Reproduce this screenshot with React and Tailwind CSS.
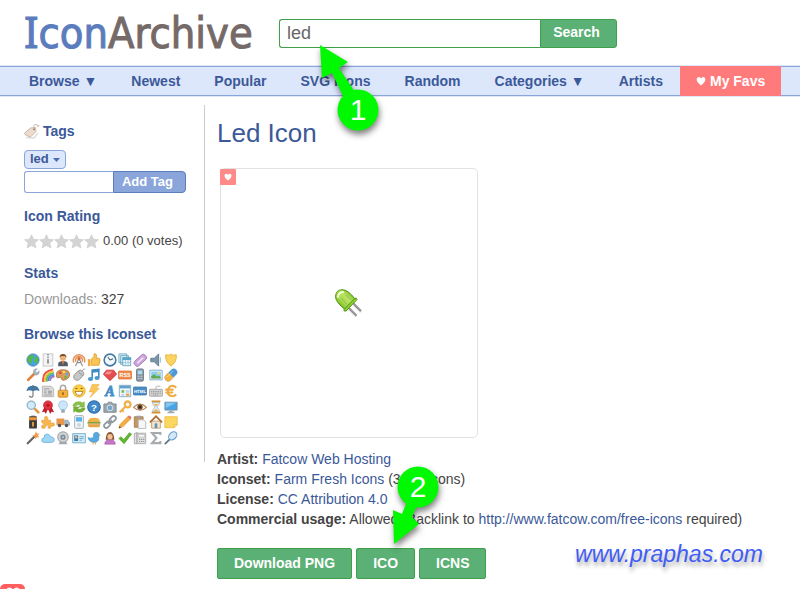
import React, { useState } from 'react';

const navItems = [
  { label: 'Browse ▼', href: '#browse' },
  { label: 'Newest', href: '#newest' },
  { label: 'Popular', href: '#popular' },
  { label: 'SVG Icons', href: '#svg' },
  { label: 'Random', href: '#random' },
  { label: 'Categories ▼', href: '#categories' },
  { label: 'Artists', href: '#artists' },
];

// 16x16 drawings, in the order of the iconset grid
const iconset = [
  {
    name: 'globe',
    art: (
      <>
        <circle cx="8" cy="8" r="7" fill="#4aa3e0" stroke="#3a86c4" />
        <path d="M3 4l4-2.500 2 2-1 3-2 1 1 3-2 2-3-3-.5-3z" fill="#54b948" />
        <path d="M10 6l3-2 1.500 4-2 4-2-.5-1.500-3z" fill="#54b948" />
      </>
    ),
  },
  {
    name: 'zip',
    art: (
      <>
        <path d="M2.500 1h11v14h-11z" fill="#f4f4f4" stroke="#c2c2c2" />
        <path d="M8 1v6" stroke="#777" strokeWidth="2" strokeDasharray="1 1" />
        <path d="M7 7h2v5H7z" fill="#888" />
      </>
    ),
  },
  {
    name: 'user',
    art: (
      <>
        <path d="M2.500 15V12Q3 9 8 9t5.500 3v3z" fill="#4f5c68" />
        <path d="M6.500 9L8 14l1.500-5z" fill="#e07b39" />
        <circle cx="8" cy="5.500" r="3.500" fill="#e8b27a" />
        <path d="M4 5Q4 1 8 1t4 4l-2-1.500H6z" fill="#7c4a22" />
      </>
    ),
  },
  {
    name: 'antenna',
    art: (
      <>
        <path d="M2 11A6.500 6.500 0 1 1 14 11M4.500 10A4 4 0 1 1 11.500 10" fill="none" stroke="#e8925a" strokeWidth="1.700" />
        <path d="M8 6L4 15M8 6l4 9M6 11h4" stroke="#8d8d8d" strokeWidth="1.300" />
        <circle cx="8" cy="6.500" r="1.900" fill="#d86a33" />
      </>
    ),
  },
  {
    name: 'thumb up',
    art: (
      <>
        <path d="M5 7l3-3V1h2l1 2-.5 3H14l1 2-1.500 6H5z" fill="#fbc556" stroke="#dfa030" />
        <path d="M1 7h3v8H1z" fill="#f0ad3c" />
      </>
    ),
  },
  {
    name: 'clock',
    art: (
      <>
        <circle cx="8" cy="8" r="6.700" fill="#f2f8fc" stroke="#427aa5" strokeWidth="1.800" />
        <path d="M8 8L5.500 4.500M8 8l3.500-1.500" stroke="#495b69" strokeWidth="1.200" />
      </>
    ),
  },
  {
    name: 'tables',
    art: (
      <>
        <path d="M1 1h9v10H1zM3 3h9v10H3z" fill="#d7edf5" stroke="#6caac4" />
        <path d="M5.500 5.500h9v9h-9z" fill="#eef8fc" stroke="#5f9fbd" />
        <path d="M5 5h10v3H5z" fill="#58a6c9" />
        <path d="M8.500 8v6M11.500 8v6M6 11h8" stroke="#9cc8da" />
      </>
    ),
  },
  {
    name: 'attachment',
    art: (
      <g transform="rotate(-42 8 8)">
        <rect x="0" y="5" width="16" height="7" rx="2.500" fill="#cda6dc" stroke="#a779bb" />
        <path d="M4 8.500h8" stroke="#f5eef8" strokeWidth="1.600" strokeLinecap="round" />
      </g>
    ),
  },
  {
    name: 'speaker',
    art: (
      <>
        <path d="M2 6h4l5-5v14l-5-5H2z" fill="#7c96aa" stroke="#61798b" />
        <path d="M13 5v6" stroke="#a4c3d9" strokeWidth="1.500" />
      </>
    ),
  },
  {
    name: 'shield',
    art: <path d="M8 1l2 1.500L14 2q1 8-6 13Q1 10 2 2l4 .5z" fill="#fbd35f" stroke="#e8af3b" />,
  },
  {
    name: 'wrench',
    art: (
      <>
        <path d="M2.500 13.500L10 6" stroke="#e0803a" strokeWidth="3" strokeLinecap="round" />
        <path d="M13 1L10.500 3.500l2 2L15 3q1 4-2.500 5T8.500 5.500 10 1.200 13 1z" fill="#a9b4bb" stroke="#8d979d" strokeWidth=".5" />
      </>
    ),
  },
  {
    name: 'rainbow',
    art: (
      <g fill="none" strokeWidth="2.200" transform="rotate(-12 8 8)">
        <path d="M1 15Q1.500 2.500 15 3" stroke="#ec5348" />
        <path d="M3 15Q3.500 4.500 15 5" stroke="#f8c33d" />
        <path d="M5 15Q5.500 6.500 15 7" stroke="#69bd52" />
        <path d="M7 15Q7.500 8.500 15 9" stroke="#4592db" />
        <path d="M9 15Q9.500 11 15 11" stroke="#a076c5" />
      </g>
    ),
  },
  {
    name: 'palette',
    art: (
      <>
        <path d="M8 2q7 0 7.500 5T9 14q-3 0-3-2t-3-1T.5 7Q1 2 8 2z" fill="#d99a5b" stroke="#b0733b" />
        <circle cx="5" cy="5.500" r="1.500" fill="#e9453a" />
        <circle cx="9" cy="4.500" r="1.500" fill="#f7e04b" />
        <circle cx="12.500" cy="7" r="1.500" fill="#56a8e6" />
        <circle cx="11" cy="10.500" r="1.500" fill="#62b84b" />
      </>
    ),
  },
  {
    name: 'mouse',
    art: (
      <>
        <path d="M11 4q1-3 4-3" fill="none" stroke="#999" />
        <rect x="4" y="2" width="8" height="13" rx="4" fill="#c6c6c6" stroke="#989898" transform="rotate(45 8 8)" />
        <path d="M7 4l5 5" stroke="#8b8b8b" />
      </>
    ),
  },
  {
    name: 'music',
    art: (
      <>
        <path d="M6 12V2.500l7.500-1V11" fill="none" stroke="#3e8ac0" strokeWidth="1.800" />
        <path d="M5.500 2l8.500-1v3.500l-8.500 1z" fill="#3e8ac0" />
        <ellipse cx="4" cy="12.500" rx="3" ry="2.300" fill="#4b98cf" />
        <ellipse cx="11.500" cy="11.500" rx="3" ry="2.300" fill="#4b98cf" />
      </>
    ),
  },
  {
    name: 'ruby',
    art: (
      <>
        <path d="M4 2.500h8L15.500 7 8 14.500.5 7z" fill="#e54e50" stroke="#ce383d" />
        <path d="M4.500 4h6L8 7H2z" fill="#f78f8d" />
      </>
    ),
  },
  {
    name: 'rss',
    art: (
      <>
        <rect x=".5" y="3.500" width="15" height="9" rx="1" fill="#ef8c4e" stroke="#e3763a" />
        <text x="8" y="10.500" fontSize="6" fontWeight="700" textAnchor="middle" fill="#fff">RSS</text>
      </>
    ),
  },
  {
    name: 'phone',
    art: (
      <>
        <rect x="4" y="1" width="8" height="14" rx="1.500" fill="#8b98a3" stroke="#6f7b85" />
        <path d="M5.500 3h5v4h-5z" fill="#a9dbf3" />
        <path d="M5.500 9.500h5M5.500 12h5" stroke="#dee3e7" strokeDasharray="1 1" />
      </>
    ),
  },
  {
    name: 'picture',
    art: (
      <>
        <path d="M1 2.500h14v11H1z" fill="#fff" stroke="#719fc0" />
        <path d="M2.500 4h11v8h-11z" fill="#88cdf0" />
        <path d="M2.500 12V9.500L6 7l3 3 2-1.500 2.500 2V12z" fill="#62a84b" />
        <circle cx="11" cy="6" r="1.300" fill="#ffe56b" />
      </>
    ),
  },
  {
    name: 'pill',
    art: (
      <g transform="rotate(-45 8 8)">
        <rect x="-.5" y="4" width="17" height="8" rx="4" fill="#4d98d8" />
        <path d="M8 4H3.500a4 4 0 0 0 0 8H8z" fill="#f5b33c" />
        <path d="M3 6.500h10" stroke="#fff" strokeOpacity=".5" />
      </g>
    ),
  },
  {
    name: 'umbrella',
    art: (
      <>
        <path d="M.5 8Q1.500 2 8 2t7.500 6L12 7 8 8 4 7z" fill="#3e79a8" />
        <path d="M8 1v12q0 2-2 2t-2-1.500" fill="none" stroke="#646f78" strokeWidth="1.200" />
      </>
    ),
  },
  {
    name: 'newspaper',
    art: (
      <>
        <path d="M1.500 2.500h10l3 3v9h-13z" fill="#dcdcdc" stroke="#b0b0b0" />
        <path d="M3.500 5.500h6M3.500 8h3M3.500 10h3M3.500 12.500h9" stroke="#999" />
        <path d="M8 7.500h4.500V11H8z" fill="#aaa" />
      </>
    ),
  },
  {
    name: 'lock',
    art: (
      <>
        <path d="M5 8V4.500a3 3 0 0 1 6 0V8" fill="none" stroke="#a9a9a9" strokeWidth="1.800" />
        <rect x="2.500" y="7" width="11" height="8" rx="1" fill="#f3b03f" stroke="#ce8c27" />
        <path d="M8 9.500v3" stroke="#8a5a14" strokeWidth="1.600" />
      </>
    ),
  },
  {
    name: 'smiley',
    art: (
      <>
        <circle cx="8" cy="8" r="7" fill="#fcd143" stroke="#e8a92c" />
        <path d="M4 5.500q1-1.500 2 0M10 5.500q1-1.500 2 0" fill="none" stroke="#7d5414" strokeWidth="1.200" />
        <path d="M3.500 8.500h9q-1 4.500-4.500 4.500T3.500 8.500z" fill="#fff" stroke="#94661a" strokeWidth=".8" />
      </>
    ),
  },
  {
    name: 'lightning',
    art: <path d="M6 .5h8L10.500 5H14L3.500 15.500 7 9H2.500z" fill="#fbc75a" stroke="#eeae3d" strokeWidth=".7" />,
  },
  {
    name: 'font',
    art: (
      <text x="8" y="13.500" fontFamily="Liberation Serif, serif" fontSize="16" fontStyle="italic" fontWeight="700" textAnchor="middle" fill="#4690c9" stroke="#4690c9">A</text>
    ),
  },
  {
    name: 'calendar',
    art: (
      <>
        <path d="M1.500 1.500h13v13h-13z" fill="#eef6fa" stroke="#7ba8c2" />
        <path d="M2 2h12v3H2z" fill="#5fa1cd" />
        <path d="M4 7h3v3H4z" fill="#79b85d" />
        <path d="M9 7h4v3H9zM4 11h3v2.500H4z" fill="#bcd6e3" />
        <path d="M9 11h4v2.500H9z" fill="#f2a14c" />
      </>
    ),
  },
  {
    name: 'html',
    art: (
      <>
        <rect x=".5" y="3.500" width="15" height="9" rx="1" fill="#4c8fc6" stroke="#3979b0" />
        <text x="8" y="10" fontSize="5" fontWeight="700" textAnchor="middle" fill="#fff">HTML</text>
      </>
    ),
  },
  {
    name: 'keyboard',
    art: (
      <>
        <path d="M8 6V3.500q0-1 1.500-1H13" fill="none" stroke="#aaa" />
        <rect x=".5" y="6" width="15" height="8" rx="1" fill="#d2d2d2" stroke="#a5a5a5" />
        <path d="M2.500 8.500h11M2.500 10.500h11M5 12.500h6" stroke="#8e8e8e" strokeDasharray="1.200 .8" />
      </>
    ),
  },
  {
    name: 'euro',
    art: (
      <path d="M14 4.200Q12 2 9.500 2 5 2.300 4.500 8T9.500 14q2.500 0 4.500-2M1.500 6.500H11M1.500 9.700h9" fill="none" stroke="#f0ac44" strokeWidth="2.500" />
    ),
  },
  {
    name: 'magnifier',
    art: (
      <>
        <path d="M9.500 9.500L14 14" stroke="#e49a42" strokeWidth="3" strokeLinecap="round" />
        <circle cx="6" cy="6" r="4.700" fill="#cdebfa" stroke="#94aebd" strokeWidth="1.400" />
      </>
    ),
  },
  {
    name: 'ribbon',
    art: (
      <>
        <path d="M4 8l-3 6 3-.5L5.500 16 8 10l2.500 6 1.500-2.500 3 .5-3-6z" fill="#c31f2b" />
        <circle cx="8" cy="6" r="5" fill="#e23440" stroke="#c31f2b" />
        <circle cx="8" cy="6" r="2" fill="#b81825" />
      </>
    ),
  },
  {
    name: 'bulb',
    art: (
      <>
        <path d="M8 1q5 0 5 5 0 2-2.500 5h-5Q3 8 3 6q0-5 5-5z" fill="#cde6fa" stroke="#9dc4e3" />
        <path d="M6 11h4v3.500H6z" fill="#9aa5ad" />
      </>
    ),
  },
  {
    name: 'refresh',
    art: (
      <>
        <path d="M1 7q1-5 7-5 2.500 0 4 1.500L14 2v6H8l2-2Q6 4.500 4.500 7z" fill="#8bc34a" stroke="#6da52f" strokeWidth=".6" />
        <path d="M15 9q-1 5-7 5-2.500 0-4-1.500L2 14V8h6l-2 2q4 1.500 5.500-1z" fill="#76b337" stroke="#5f9629" strokeWidth=".6" />
      </>
    ),
  },
  {
    name: 'help',
    art: (
      <>
        <circle cx="8" cy="8" r="7.200" fill="#4089cb" stroke="#2e6ca8" strokeWidth="1.200" />
        <text x="8" y="12" fontSize="11" fontWeight="700" textAnchor="middle" fill="#fff">?</text>
      </>
    ),
  },
  {
    name: 'camera',
    art: (
      <>
        <path d="M1 4.500h4l1-2h4l1 2h4v9.500H1z" fill="#9ba5ad" stroke="#7e8890" />
        <circle cx="8" cy="9" r="3.300" fill="#74a5cc" stroke="#e5e9ec" />
      </>
    ),
  },
  {
    name: 'key',
    art: (
      <>
        <path d="M9 7l-7 7M4.500 11.500l2 2" stroke="#efae45" strokeWidth="2.400" />
        <circle cx="11" cy="5" r="3.300" fill="#fff" stroke="#f2b04a" strokeWidth="2.600" />
      </>
    ),
  },
  {
    name: 'eye',
    art: (
      <>
        <path d="M.5 8.500Q8 1 15.500 8.500 8 15 .5 8.500z" fill="#f8efe4" stroke="#b3875b" strokeWidth="1.200" />
        <circle cx="8" cy="8" r="3" fill="#69472c" />
        <circle cx="8" cy="8" r="1.200" fill="#241509" />
      </>
    ),
  },
  {
    name: 'hourglass',
    art: (
      <>
        <path d="M4 2.500h8q0 3-3 5.500 3 2.500 3 5.500H4q0-3 3-5.500-3-2.500-3-5.500z" fill="#e5f1f7" stroke="#a6bbc6" />
        <path d="M5.500 4.500h5L8 7.500zM5 13l3-3 3 3z" fill="#efb14c" />
        <path d="M3 1.500h10M3 14.500h10" stroke="#d79236" strokeWidth="2" />
      </>
    ),
  },
  {
    name: 'monitor',
    art: (
      <>
        <path d="M1 2.500h14v9H1z" fill="#4aa3e6" stroke="#78909f" />
        <path d="M2 3h12L2 9z" fill="#83c6f3" />
        <path d="M6 12h4v1.500h2V15H4v-1.500h2z" fill="#9dabb4" />
      </>
    ),
  },
  {
    name: 'battery',
    art: (
      <>
        <path d="M6 .5h4V2H6z" fill="#999" />
        <rect x="3.500" y="1.500" width="9" height="14" rx="1" fill="#3f3a38" />
        <path d="M3.500 2.500h9V6h-9z" fill="#e8903a" />
        <path d="M7 8h2v5H7z" fill="#e8a746" />
      </>
    ),
  },
  {
    name: 'puzzle',
    art: (
      <path d="M1 6h3.500Q3 2 5.500 1.500T8 6h3v3.500q4-1.500 4.500 1T11 13v2H8q1-3.500-1-3.500T4.500 15H1v-3.500q2.500.5 2.500-1T1 9z" fill="#f8b650" stroke="#e69a35" strokeWidth=".7" />
    ),
  },
  {
    name: 'truck',
    art: (
      <>
        <path d="M.5 4h9v7.500h-9z" fill="#e8964b" />
        <path d="M10 6h3.500l2 3v2.500H10z" fill="#a9bccb" stroke="#7c93a5" strokeWidth=".7" />
        <circle cx="4" cy="12" r="2" fill="#555" />
        <circle cx="12" cy="12" r="2" fill="#555" />
      </>
    ),
  },
  {
    name: 'player',
    art: (
      <>
        <rect x="3" y=".7" width="10" height="14.500" rx="1.200" fill="#f3f6f8" stroke="#9daab3" />
        <path d="M4.500 2.500h7v5h-7z" fill="#5bb3e8" />
        <circle cx="8" cy="11.300" r="2.200" fill="#ced6db" />
      </>
    ),
  },
  {
    name: 'burger',
    art: (
      <>
        <path d="M1 8q0-5 7-5t7 5z" fill="#efb04c" />
        <path d="M.5 8h15v1.700H.5z" fill="#72a93a" />
        <path d="M1 9.700h14V11H1z" fill="#c98a35" />
        <path d="M1 11h14q0 3-2 3H3q-2 0-2-3z" fill="#e9a543" />
      </>
    ),
  },
  {
    name: 'link',
    art: (
      <g transform="rotate(-45 8 8)" fill="none" stroke="#8f989e" strokeWidth="2">
        <rect x="-.5" y="5.500" width="8" height="5" rx="2.500" />
        <rect x="8.500" y="5.500" width="8" height="5" rx="2.500" />
        <path d="M5 8h6" />
      </g>
    ),
  },
  {
    name: 'pencil',
    art: (
      <>
        <path d="M1 15l1.500-4.500 9-9 3 3-9 9z" fill="#f5ac43" stroke="#d98b2e" strokeWidth=".6" />
        <path d="M11 2l1-1.200q1-.8 2 .2l1 1q1 1 0 1.800l-1 1.200z" fill="#de7b69" />
        <path d="M1 15l.8-2.500 1.700 1.700z" fill="#554638" />
      </>
    ),
  },
  {
    name: 'clipboard',
    art: (
      <>
        <path d="M1.500 2h10v12h-10z" fill="#c29667" stroke="#a57a4c" />
        <path d="M4 .8h5V3H4z" fill="#9da4a8" />
        <path d="M6 5.500h6l2.500 2.500v7.500H6z" fill="#f6f6f6" stroke="#b5b5b5" />
      </>
    ),
  },
  {
    name: 'house',
    art: (
      <>
        <path d="M3 7h10v8H3z" fill="#f3e5ca" stroke="#bb9c70" />
        <path d="M1 8.500L8 1.500l7 7" fill="none" stroke="#ad6f3a" strokeWidth="2" />
        <path d="M6.500 9.500h3V15h-3z" fill="#6094bc" />
      </>
    ),
  },
  {
    name: 'note',
    art: (
      <>
        <path d="M1 2h14v9l-3.500 3.500H1z" fill="#fcd75f" stroke="#eeba42" />
        <path d="M15 11h-3.500v3.500z" fill="#fff0b0" stroke="#e2ae3a" strokeWidth=".6" />
      </>
    ),
  },
  {
    name: 'wand',
    art: (
      <>
        <path d="M2 14l8-8" stroke="#666" strokeWidth="2.600" strokeLinecap="round" />
        <path d="M11.500 0l1 3 3-.5-2 2.500 2 2.500-3.200-.5L11 9.500 10 6.500 7 5.500l3-1.200z" fill="#f49a46" />
      </>
    ),
  },
  {
    name: 'cloud',
    art: <path d="M3.500 13Q.8 13 .8 10.500T3.500 8Q3 3.500 7 3.500q3 0 3.700 3 4.500.5 4.500 3.500T12 13z" fill="#9fd5f5" stroke="#70b6dd" />,
  },
  {
    name: 'webcam',
    art: (
      <>
        <path d="M3 15l2-3.500h6l2 3.500z" fill="#a0a6aa" />
        <circle cx="8" cy="7" r="6" fill="#d3d6d8" stroke="#a0a6aa" strokeWidth="1.200" />
        <circle cx="8" cy="7" r="3" fill="#7f8b94" />
        <circle cx="8" cy="7" r="1.300" fill="#a9c6da" />
      </>
    ),
  },
  {
    name: 'card',
    art: (
      <>
        <path d="M.8 3h14.500v10.500H.8z" fill="#d6edf8" stroke="#6aa7c9" />
        <path d="M2.500 5H7v6.500H2.500z" fill="#3d7dab" />
        <circle cx="4.700" cy="7.200" r="1.500" fill="#edb98a" />
        <path d="M8.500 6.500h5M8.500 8.500h5M8.500 10.500h3" stroke="#6aa7c9" />
      </>
    ),
  },
  {
    name: 'bird',
    art: (
      <>
        <path d="M1 7.500q4 1.500 6.500-.5-1-5 3-5.500 3 0 3.500 2.500-.5 2-.5 4 0 5-5.500 5Q2.500 13 1 7.500z" fill="#53a9e0" stroke="#3b88bd" strokeWidth=".6" />
        <path d="M14 4l2 .8-2 1z" fill="#f1a23a" />
        <path d="M7 13v2.500M9.500 13v2.500" stroke="#e8963b" />
      </>
    ),
  },
  {
    name: 'woman',
    art: (
      <>
        <path d="M3 10Q3.500 1 8 1t5 9z" fill="#8a5132" />
        <path d="M2 15q0-5 6-5t6 5z" fill="#c478c6" stroke="#a65baa" strokeWidth=".7" />
        <circle cx="8" cy="6.500" r="3" fill="#f1c294" />
      </>
    ),
  },
  {
    name: 'tick',
    art: <path d="M1 8.500l2.500-2 3 3.500 6.500-8 2.500 1.500L7 14.500z" fill="#5eb92f" stroke="#489a20" strokeWidth=".7" />,
  },
  {
    name: 'fax',
    art: (
      <>
        <path d="M1.500 2.500h13v12h-13z" fill="#e1e1e1" stroke="#a7a7a7" />
        <path d="M4.500 1.500v13" stroke="#a7a7a7" strokeWidth="1.500" />
        <path d="M6.500 4h6.500v3H6.500z" fill="#f9f9f9" stroke="#aaa" strokeWidth=".6" />
        <path d="M7 9.500h6M7 12h6" stroke="#8b8b8b" strokeDasharray="1.300 1" strokeWidth="1.300" />
      </>
    ),
  },
  {
    name: 'sum',
    art: <path d="M13 4.500V2.200H3.500L8.500 8l-5 5.800H13v-2.300" fill="none" stroke="#a6abaf" strokeWidth="2.400" />,
  },
  {
    name: 'racket',
    art: (
      <>
        <path d="M1.500 14.500L6.500 9.500" stroke="#61737f" strokeWidth="2" strokeLinecap="round" />
        <ellipse cx="10" cy="5.500" rx="5.300" ry="3.900" transform="rotate(-45 10 5.500)" fill="#d4e8f8" stroke="#6e9fce" strokeWidth="1.300" />
      </>
    ),
  },
];

function HeartIcon({ className }) {
  return (
    <svg viewBox="0 0 16 16" className={className} fill="currentColor" aria-hidden="true">
      <path d="M8 15Q1 9.500 1 5.500 1 1.500 4.500 1.500 7 1.500 8 4q1-2.500 3.500-2.500Q15 1.500 15 5.500 15 9.500 8 15z" />
    </svg>
  );
}

function TagIcon() {
  return (
    <svg viewBox="0 0 16 16" className="w-4 h-4" aria-hidden="true">
      <path d="M2 14.500l8 .5 4-5" fill="none" stroke="#ddd" strokeWidth="1.500" />
      <path d="M.8 10L6.500 5l5-.5.5 4-5 5q-1 .7-2 0l-4-2q-.8-.6-.2-1.500z" fill="#ecdccd" stroke="#c3aa96" strokeWidth=".8" />
      <circle cx="10" cy="6.300" r="1" fill="#8f7c70" />
      <path d="M10 6Q9 1 12 1.500T14 4l1-2" fill="none" stroke="#c8bcb4" />
    </svg>
  );
}

function Star() {
  return (
    <svg viewBox="0 0 16 16" className="size-[15px]" aria-hidden="true">
      <path d="M8 .8l2.200 4.800 5.200.5-3.900 3.500 1.200 5.300L8 12.200l-4.700 2.700 1.200-5.300L.6 6.100l5.200-.5z" fill="#d4d4d4" stroke="#c6c6c6" strokeWidth=".6" />
    </svg>
  );
}

function LedIcon() {
  return (
    <svg viewBox="0 0 32 32" className="w-8 h-8" role="img" aria-label="Led">
      <defs>
        <linearGradient id="led-body" x1="0" y1="1" x2="1" y2="0">
          <stop offset="0.100" stopColor="#5fa814" />
          <stop offset=".4" stopColor="#a9dd4c" />
          <stop offset=".6" stopColor="#b9e562" />
          <stop offset=".9" stopColor="#62b016" />
        </linearGradient>
      </defs>
      <path d="M16 22l7.500 7.500M21 18l7 7" stroke="#ddd" strokeWidth="2.500" />
      <path d="M15.500 20.500l8 8M20 16l8 8" stroke="#858585" strokeWidth="2" />
      <path d="M16 20.500l7.500 7.500M20.500 16l7.500 7.500" stroke="#c4c4c4" strokeWidth=".7" />
      <path d="M12 22.500Q2.500 15 2.500 9.500 3 3 9 2.700q6-.2 13 9.300z" fill="url(#led-body)" stroke="#4f9410" />
      <path d="M5 10q.5-4.500 5-5" fill="none" stroke="#effbd0" strokeWidth="2" strokeLinecap="round" />
      <path d="M8.500 11l5.500 6.500M12.500 8l6 5.500" stroke="#9a9a5a" strokeWidth="1.500" strokeOpacity=".35" />
      <path d="M11 22.500L22 11.200q1.800-.4 2 1.300L13 24q-2.500.7-2-1.500z" fill="#8ed330" stroke="#4f9410" />
    </svg>
  );
}

function Header({ query, onQueryChange }) {
  return (
    <header className="flex items-center h-[65px] pl-6">
      <a
        href="#home"
        className="w-[255px] shrink-0 font-['DejaVu_Sans_Condensed','Noto_Sans',sans-serif] text-[43px] leading-[62px] text-[#766a69] [-webkit-text-stroke:1px_currentColor]"
      >
        <span className="text-[#5b7dbd]">
          <span className="font-['Noto_Sans',sans-serif]">I</span>con
        </span>
        Archive
      </a>
      <form className="flex h-[29px] mt-[2px]" onSubmit={(e) => e.preventDefault()}>
        <input
          type="text"
          aria-label="Search icons"
          value={query}
          onChange={(e) => onQueryChange(e.target.value)}
          className="w-[261px] px-[7px] pb-[2px] text-lg leading-6 text-[#666] bg-white border border-r-0 border-[#3f9f4a] rounded-l-[3px] outline-none"
        />
        <button
          type="submit"
          className="w-[77px] pb-[3px] pr-1 text-sm font-bold text-white bg-[#5bb075] border border-[#3f9f4a] rounded-r-[3px]"
        >
          Search
        </button>
      </form>
    </header>
  );
}

function Nav() {
  return (
    <div className="border-y border-[#dde7f8]">
      <nav className="flex h-[30px] pl-3 bg-[#dde7fb] border-y border-[#8aa5da] text-sm font-bold text-[#3b5998]">
        {navItems.map((item) => (
          <a key={item.label} href={item.href} className="flex items-center px-[17px] whitespace-nowrap">
            {item.label}
          </a>
        ))}
        <a href="#favs" className="flex items-center gap-1 px-4 -my-px bg-[#ff7b7b] text-white whitespace-nowrap">
          <HeartIcon className="size-[10px]" />
          My Favs
        </a>
      </nav>
    </div>
  );
}

function Sidebar() {
  return (
    <aside className="w-[181px] h-[357px] shrink-0 border-r border-[#ccc]">
      <h2 className="flex items-center gap-[3px] pt-4 leading-5 font-bold text-[#3b5998]">
        <TagIcon />
        Tags
      </h2>
      <button
        type="button"
        className="flex items-center gap-1 h-[19px] mt-[9px] px-[5px] text-[13px] font-bold text-[#3b5998] bg-[#dde7fb] border border-[#8aa5da] rounded-[4px]"
      >
        led
        <svg viewBox="0 0 7 4" className="w-[7px] h-1" fill="#4a6cb0" aria-hidden="true">
          <path d="M0 0h7L3.500 4z" />
        </svg>
      </button>
      <form className="flex h-[22px] mt-[2px]" onSubmit={(e) => e.preventDefault()}>
        <input
          type="text"
          aria-label="New tag"
          className="w-[89px] px-1 border border-r-0 border-[#8aa5da] rounded-l-[3px] outline-none"
        />
        <button
          type="submit"
          className="w-[73px] pb-px pr-1 text-[13px] font-bold leading-5 text-white bg-[#8aa5da] border border-[#5b7dbd] rounded-r-[4px]"
        >
          Add Tag
        </button>
      </form>

      <h2 className="mt-[13px] leading-5 font-bold text-[#3b5998]">Icon Rating</h2>
      <div className="flex items-center mt-[5px] leading-5 text-[13px]">
        {[1, 2, 3, 4, 5].map((n) => (
          <Star key={n} />
        ))}
        <span className="ml-1">0.00 (0 votes)</span>
      </div>

      <h2 className="mt-3 leading-5 font-bold text-[#3b5998]">Stats</h2>
      <p className="mt-[6px] leading-5">
        <span className="text-[#999]">Downloads:</span> 327
      </p>

      <h2 className="mt-[15px] leading-5 font-bold text-[#3b5998]">Browse this Iconset</h2>
      <ul className="grid grid-cols-10 grid-rows-6 place-items-center w-[154px] h-[94px] mt-2 ml-px">
        {iconset.map((icon) => (
          <li key={icon.name}>
            <svg viewBox="0 0 16 16" className="block size-[14px]" role="img" aria-label={icon.name}>
              {icon.art}
            </svg>
          </li>
        ))}
      </ul>
    </aside>
  );
}

function DownloadButton({ children }) {
  return (
    <button
      type="button"
      className="h-[31px] px-4 pb-px font-bold text-white bg-[#5bb075] border border-[#3f9f4a] rounded-[2px] whitespace-nowrap"
    >
      {children}
    </button>
  );
}

function IconDetails() {
  return (
    <main className="flex-1 min-w-0 pl-3">
      <h1 className="pt-3 text-[26px] leading-8 text-[#3b5998]">Led Icon</h1>
      <div className="flex items-center justify-center relative w-[258px] h-[270px] mt-[19px] ml-[3px] border border-[#e2e2e2] rounded-[5px]">
        <button
          type="button"
          aria-label="Add to favourites"
          className="absolute -left-px top-0 flex items-center justify-center size-4 bg-[#ff8a8a] text-white rounded-[1px]"
        >
          <HeartIcon className="size-2" />
        </button>
        <LedIcon />
      </div>
      <div className="mt-[11px] leading-5">
        <p>
          <b>Artist:</b> <a href="#artist" className="text-[#3b5998]">Fatcow Web Hosting</a>
        </p>
        <p>
          <b>Iconset:</b> <a href="#iconset" className="text-[#3b5998]">Farm Fresh Icons</a> (3000 icons)
        </p>
        <p>
          <b>License:</b> <a href="#license" className="text-[#3b5998]">CC Attribution 4.0</a>
        </p>
        <p>
          <b>Commercial usage:</b> Allowed (Backlink to{' '}
          <a href="#backlink" className="text-[#3b5998]">http://www.fatcow.com/free-icons</a> required)
        </p>
      </div>
      <div className="flex items-start mt-[19px]">
        <div className="flex gap-1">
          <DownloadButton>Download PNG</DownloadButton>
          <DownloadButton>ICO</DownloadButton>
          <DownloadButton>ICNS</DownloadButton>
        </div>
        <a
          href="#praphas"
          className="ml-auto mr-[37px] -mt-2 text-[23px] leading-7 italic text-[#3f5cf5] [text-shadow:1px_4px_4px_rgba(0,0,0,0.35)]"
        >
          www.praphas.com
        </a>
      </div>
    </main>
  );
}

// Numbered pointers that lie over the page
function Pointers() {
  return (
    <svg
      className="absolute left-0 top-0 w-[500px] h-[589px] pointer-events-none"
      viewBox="0 0 500 589"
    >
      <g fill="#00f900" className="[filter:drop-shadow(1px_4px_3px_rgba(0,0,0,0.5))]">
        <path d="M320 45l28 17-9 6 16 24-11 6-12-25-10 5z" />
        <circle cx="358" cy="110" r="20.500" />
        <path d="M394 544l-1-34 9 4 6-15 10 4-6 14 7 7z" />
        <circle cx="418" cy="487" r="20.500" />
      </g>
      <g fill="#fff" fontSize="30" textAnchor="middle">
        <text x="358" y="120">1</text>
        <text x="418" y="497">2</text>
      </g>
    </svg>
  );
}

export default function App() {
  const [query, setQuery] = useState('led');

  return (
    <div className="relative min-h-screen overflow-hidden bg-white font-['Liberation_Sans',Arial,sans-serif] text-sm text-[#444]">
      <Header query={query} onQueryChange={setQuery} />
      <Nav />
      <div className="flex items-start pl-6 pt-2">
        <Sidebar />
        <IconDetails />
      </div>
      <Pointers />
      <div className="absolute left-0 -bottom-4 flex justify-center w-[25px] h-[21px] bg-[#ff5f5f] rounded-[5px] text-white">
        <HeartIcon className="w-[18px] h-4 mt-[2px]" />
      </div>
    </div>
  );
}
